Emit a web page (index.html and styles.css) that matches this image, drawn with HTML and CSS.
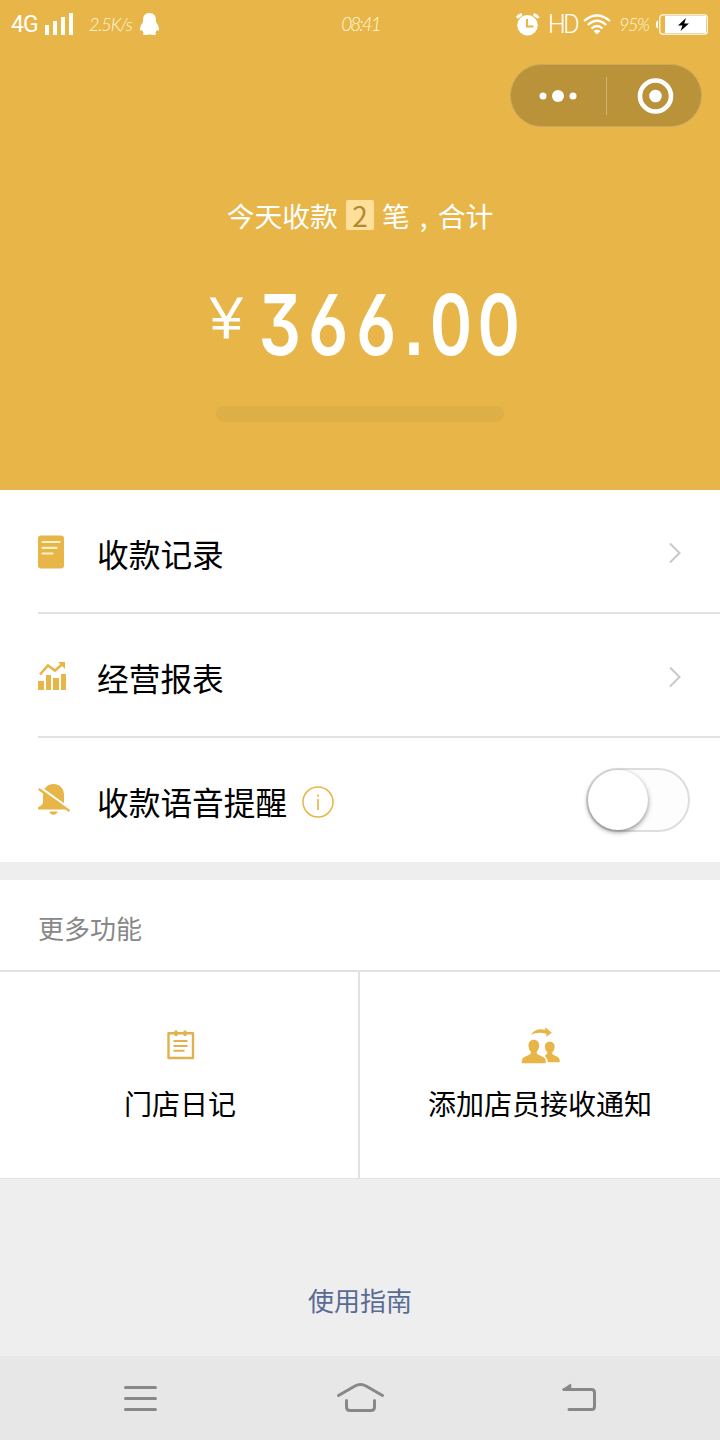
FILE: index.html
```
<!DOCTYPE html>
<html lang="zh-CN">
<head>
  <meta charset="UTF-8">
  <meta name="viewport" content="width=device-width, initial-scale=1">
  <title>收款小账本</title>
  <link rel="stylesheet" href="styles.css">
</head>
<body>
  <header class="hero">
    <div class="status-bar">
      <div class="status-left">
        <span class="net">4G</span>
        <svg class="signal" width="29" height="22" viewBox="0 0 29 22" fill="#fff"><path d="M0 12h4v10H0zM8 8h4v14H8zM16 4h4v18h-4zM24 0h4v22h-4z"/></svg>
        <span class="speed">2.5K/s</span>
        <svg class="penguin" width="19" height="22" viewBox="0 0 19 22" fill="#fff"><path d="M9.500 0C5 0 3 3 3 7v2C1.500 11 0 14 0 16.500c0 1.500.8 1.800 2 .5.4 1 1 1.800 1.800 2.500C2 20.500 3 22 5.500 22c1.800 0 3-.3 4-.8 1 .5 2.200.8 4 .8 2.500 0 3.500-1.500 1.700-2.500.8-.7 1.400-1.500 1.800-2.500 1.200 1.300 2 1 2-.5C19 14 17.500 11 16 9V7c0-4-2-7-6.500-7z"/></svg>
      </div>
      <span class="clock">08:41</span>
      <div class="status-right">
        <svg width="24" height="23" viewBox="0 0 24 23"><circle cx="11.500" cy="12.300" r="10.300" fill="#fff"/><path d="M1 5a8 8 0 0 1 5-3.500M17.500 1.500A8 8 0 0 1 22.500 5" fill="none" stroke="#fff" stroke-width="3"/><path d="M11 6v7.500h6.500" fill="none" stroke="#e7b548" stroke-width="2"/></svg>
        <span class="hd">HD</span>
        <svg class="wifi" width="28" height="21" viewBox="0 0 28 21" fill="none" stroke="#fff" stroke-width="2.200"><path d="M1 7Q14-4 27 7M4.800 11Q14 2.500 23.200 11M8.500 14.500Q14 9.500 19.500 14.500"/><path d="M10.500 17Q14 14 17.500 17L14 20.500z" fill="#fff" stroke="none"/></svg>
        <span class="percent">95%</span>
        <svg class="battery" width="52" height="21" viewBox="0 0 52 21"><path d="M2 6.500Q0 6.500 0 10.500T2 14.500z" fill="#fff"/><rect x="3.800" y=".8" width="47.500" height="19.400" rx="3" fill="none" stroke="#fff" stroke-width="1.200"/><path d="M9 2h41v17H9z" fill="#fff"/><path d="M30 4l-8 7.500h4.500L24.500 17l8.500-7.500h-4.800z" fill="#000"/></svg>
      </div>
    </div>
    <div class="capsule">
      <svg width="190" height="61" viewBox="0 0 190 61" fill="#fff"><circle cx="32" cy="31" r="3.500"/><circle cx="47" cy="31" r="6"/><circle cx="62" cy="31" r="3.500"/><path d="M95 12h1v38h-1z" opacity=".3"/><circle cx="144.500" cy="31" r="15.500" fill="none" stroke="#fff" stroke-width="4.600"/><circle cx="144.500" cy="31" r="6.300"/></svg>
    </div>
    <p class="summary">今天收款<span class="count">2</span>笔<span class="comma">,</span>合计</p>
    <div class="amount"><span class="yen">¥</span><span class="num">366<span class="dot">.</span>00</span></div>
    <div class="ticket-slot"></div>
  </header>

  <ul class="menu">
    <li class="menu-item">
      <span class="menu-icon"><svg width="33" height="34" viewBox="0 0 33 34"><rect y=".5" width="26" height="33" rx="3" fill="#e7b548"/><path d="M4.500 7h17M4.500 12.800h14M4.500 18.500h10" stroke="#fff2c4" stroke-width="2.200" stroke-linecap="round"/></svg></span>
      <span class="menu-label">收款记录</span>
      <svg class="arrow" width="14" height="22" viewBox="0 0 14 22" fill="none" stroke="#c7c7cc" stroke-width="2"><path d="M2 1.500l9.500 9.500L2 20.500"/></svg>
    </li>
    <li class="menu-item">
      <span class="menu-icon"><svg width="33" height="34" viewBox="0 0 33 34"><path d="M0 22h6v9H0zM8 16h5v15H8zM15 19h6v12h-6zM23 15h5v16h-5z" fill="#e7b548"/><path d="M2 15.500l8-9 7 5 8-7" fill="none" stroke="#e7b548" stroke-width="2.600"/><path d="M20 3h7v7z" fill="#e7b548"/></svg></span>
      <span class="menu-label">经营报表</span>
      <svg class="arrow" width="14" height="22" viewBox="0 0 14 22" fill="none" stroke="#c7c7cc" stroke-width="2"><path d="M2 1.500l9.500 9.500L2 20.500"/></svg>
    </li>
    <li class="menu-item">
      <span class="menu-icon"><svg width="33" height="34" viewBox="0 0 33 34"><path d="M5 12C5 5 9.500 1 15.500 1S26 5 26 12v8c0 2 1 3.500 4 5v1.500H0V24c3-1 5-2.500 5-5zM11.500 28.500h8c0 2-1.800 3.200-4 3.200s-4-1.200-4-3.200z" fill="#e7b548"/><path d="M2 4.500l30 21.500" stroke="#fff" stroke-width="2.600"/><path d="M.8 6l30.700 22" stroke="#e7b548" stroke-width="2.300"/></svg></span>
      <span class="menu-label">收款语音提醒</span>
      <svg class="info" width="32" height="32" viewBox="0 0 32 32"><circle cx="16" cy="16" r="15" fill="none" stroke="#e7b548" stroke-width="1.500"/><path d="M15.200 13h1.600v11h-1.600zM15.200 8.500h1.700v2.200h-1.700z" fill="#e7b548"/></svg>
      <span class="switch"><i class="switch-knob"></i></span>
    </li>
  </ul>

  <section class="more">
    <h2 class="more-title">更多功能</h2>
    <div class="grid">
      <div class="grid-item">
        <svg width="40" height="38" viewBox="0 0 40 38" fill="none" stroke="#e0b14c"><path d="M8.500 6.200h24.500v24.800H8.500z" stroke-width="2.400" stroke-linejoin="round"/><path d="M16 3.500v5.500M25 3.500v5.500" stroke-width="3"/><path d="M13.500 14h14M13.500 19h14M13.500 23.800h11" stroke-width="2"/></svg>
        <span>门店日记</span>
      </div>
      <div class="grid-item">
        <svg width="40" height="38" viewBox="0 0 40 38" fill="#e7b548"><g transform="translate(.8 .8)"><path d="M10 7Q15 0 24.500 2V-.5l6.500 5.500-5.500 4V6Q17 3.500 10 7z"/><path d="M13 12c3.500 0 5.500 2.500 5.300 6-.1 2.500-1 4.500-2.300 6v2c2 1.600 5.500 2.500 7.500 4 1 .8 1.500 2 1.500 5.500H1C1 32 1.500 30.800 2.500 30c2-1.500 5.700-2.400 7.500-4v-2c-1.400-1.500-2.200-3.500-2.300-6-.2-3.500 1.800-6 5.300-6z"/><path d="M29 14c3.300 0 5 2.200 4.800 5.200-.1 2.200-1 4-2.300 5.300v1.700c1.500 1.400 4.500 2.200 6 3.400 1 .8 1.500 2 1.500 4.900H27c0-2.500-1.200-4.700-2.500-5.600v-1.700c.9-.4 1.600-.8 2-1.200v-1.500c-1.400-1.300-2.200-3.100-2.300-5.300-.2-3 1.500-5.200 4.800-5.200z"/></g></svg>
        <span>添加店员接收通知</span>
      </div>
    </div>
  </section>

  <footer class="guide"><a class="guide-link">使用指南</a></footer>

  <nav class="nav-bar">
    <svg width="50" height="34" viewBox="0 0 50 34"><path d="M10.500 5.500h30M10.500 16.500h30M10.500 27.500h30"/></svg>
    <svg width="50" height="34" viewBox="0 0 50 34"><path d="M3.500 13.500L20 4Q25.500 1 31 4l16.500 9.500M11.500 18.500V25q0 3.500 3.500 3.500h21q3.500 0 3.500-3.500v-6.500"/></svg>
    <svg width="50" height="34" viewBox="0 0 50 34"><path d="M9 7.500H36.500q3 0 3 3v14q0 3-3 3H14"/><path d="M8 7.500L15.500 2.500v5z" fill="#888" stroke-width="1.500"/></svg>
  </nav>
</body>
</html>
```
FILE: styles.css
```
* { box-sizing: border-box; }
html, body {
  margin: 0; padding: 0;
  font-family: "Noto Sans CJK SC", sans-serif;
  background: #eee;
  color: #000;
}
body { width: 720px; height: 1440px; overflow: hidden; display: flex; flex-direction: column; }
svg { display: block; flex: none; }
p, ul, h2 { margin: 0; padding: 0; font-weight: 400; }

/* top */
.hero {
  height: 490px;
  background: #e7b548;
  color: #fff;
  display: flex; flex-direction: column; align-items: center;
}
.status-bar {
  width: 100%; height: 48px; padding: 0 12px 0 11px;
  display: grid; grid-template-columns: 1fr auto 1fr; align-items: center;
  font-family: Roboto, sans-serif;
  white-space: nowrap;
}
.status-left, .status-right { display: flex; align-items: center; }
.status-right { justify-content: flex-end; }
.net { font-size: 23px; width: 34px; letter-spacing: -1px; }
.speed { font: italic 300 18px Lato, sans-serif; width: 51px; margin-left: 15px; letter-spacing: -1.1px; color: #fff8d8; }
.clock { font: italic 300 19px Lato, sans-serif; letter-spacing: -2px; color: #fff8d8; padding: 0 0 2px 2px; }
.hd { font-size: 25px; font-weight: 300; width: 30px; margin-left: 8px; letter-spacing: -2.500px; }
.wifi { margin-left: 5px; }
.percent { font: italic 300 18px Lato, sans-serif; width: 30px; margin: 0 7px 0 8px; letter-spacing: -1.4px; color: #fff8d8; }
.capsule {
  align-self: flex-end;
  width: 192px; height: 63px; margin: 16px 18.500px 0 0;
  background: #b99239; border: 1px solid #cba95d; border-radius: 32px;
}
.summary { display: flex; align-items: center; height: 40px; margin-top: 68px; font-size: 27.800px; }
.count {
  width: 28px; height: 30px; margin: 0 8px;
  background: #ffdf99; color: #b08a2f; border-radius: 2px;
  line-height: 30px; text-align: center;
}
.comma { width: 28px; text-align: center; }
.amount { display: flex; width: 312px; height: 90px; margin-top: 45px; }
.yen {
  flex: none; width: 55px; padding-left: 5px;
  font: 300 56px/78px Roboto, sans-serif;
  -webkit-text-stroke: 1px #fff;
  transform: scaleX(1.15); transform-origin: left;
}
.num {
  flex: none;
  font: 600 84px/90px Inter, sans-serif;
  font-feature-settings: "tnum", "ss01", "cv09";
  letter-spacing: 6.200px;
  white-space: nowrap;
  transform: scaleX(.79); transform-origin: left;
}
.dot { display: inline-block; width: 34.200px; padding-right: 5px; font-family: "Liberation Sans", sans-serif; font-weight: 700; letter-spacing: 0; text-align: center; line-height: 1; }
.ticket-slot { width: 288px; height: 16px; margin-top: 36px; border-radius: 8px; background: #ddaf46; }

/* list */
.menu { list-style: none; background: #fff; padding-left: 38px; height: 372px; }
.menu-item { height: 124px; display: flex; align-items: center; padding: 2px 38px 0 0; border-bottom: 2px solid #e2e2e2; }
.menu-item:last-child { border-bottom: 0; padding: 0 30px 0 0; }
.menu-icon { width: 59px; }
.menu-label { font-size: 31.700px; line-height: 48px; padding-top: 2px; }
.arrow { margin: 2px 0 0 auto; }
.info { margin: 4px 0 0 15px; }
.switch {
  width: 104px; height: 64px; margin-left: auto;
  border: 2px solid #dfdedb; border-radius: 32px; background: #fdfdfd;
}
.switch-knob { display: block; width: 60px; height: 60px; border-radius: 50%; background: #fff; box-shadow: 0 2px 5px rgba(0,0,0,.45); }

/* more */
.more { margin-top: 18px; background: #fff; }
.more-title { height: 90px; padding: 4px 38px 0; font-size: 26px; line-height: 88px; color: #888; }
.grid { display: grid; grid-template-columns: 360px 360px; height: 209px; border-top: 2px solid #e2e2e2; border-bottom: 1px solid #e2e2e2; }
.grid-item { display: flex; flex-direction: column; align-items: center; padding-top: 55px; font-size: 28px; }
.grid-item:first-child { border-right: 2px solid #e2e2e2; padding-left: 2px; }
.grid-item span { line-height: 42px; margin-top: 17px; }

/* bottom */
.guide { height: 177px; padding-top: 102px; text-align: center; font-size: 26px; line-height: 38px; }
.guide-link { color: #576b95; }
.nav-bar { height: 84px; padding: 2px 115px 0; display: flex; justify-content: space-between; align-items: center; background: #e7e7e7; }
.nav-bar svg { fill: none; stroke: #888; stroke-width: 3; stroke-linecap: round; stroke-linejoin: round; }
```
